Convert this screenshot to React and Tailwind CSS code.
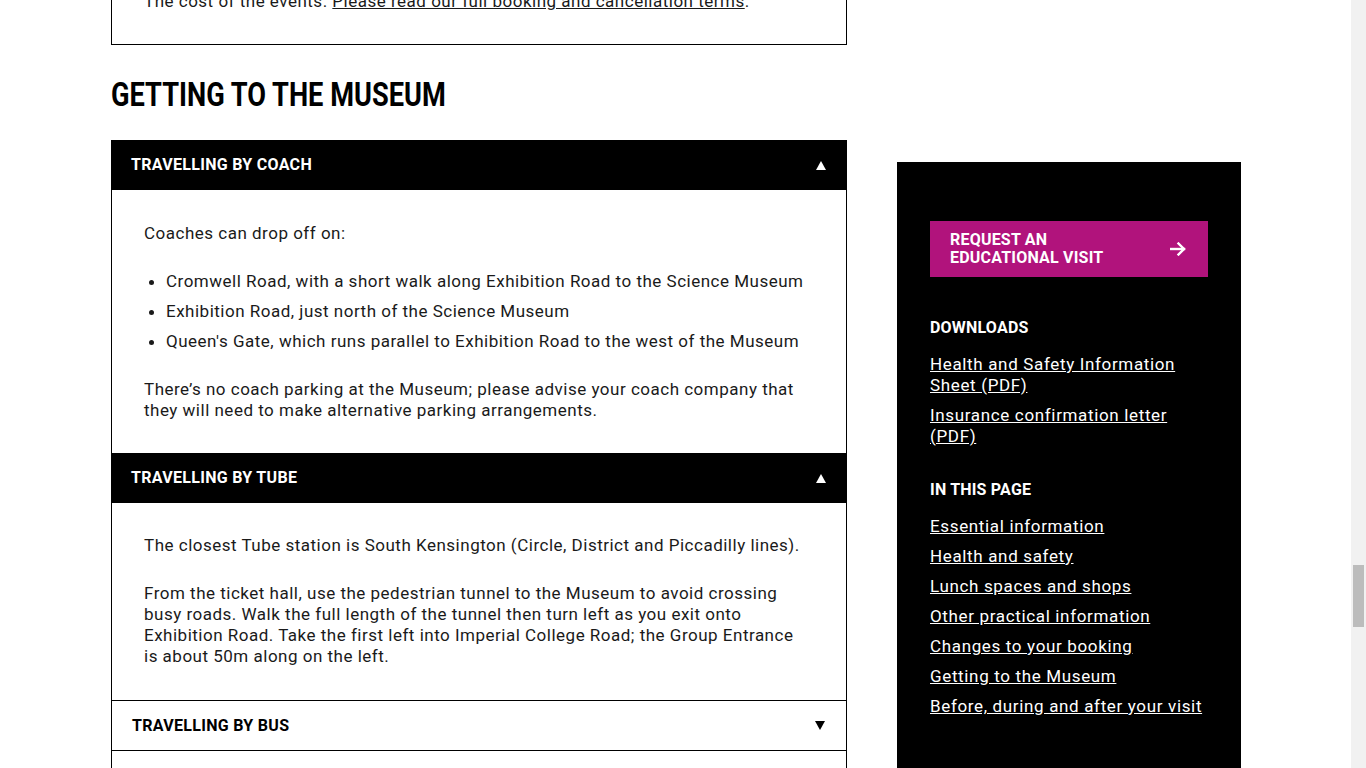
import React from "react";

const Up = () => (
  <svg width="10" height="9" viewBox="0 0 10 9" className="fill-current"><path d="M5 0 L10 9 L0 9 Z" /></svg>
);
const Down = () => (
  <svg width="10" height="9" viewBox="0 0 10 9" className="fill-current"><path d="M0 0 L10 0 L5 9 Z" /></svg>
);

const Arrow = () => (
  <svg width="16" height="14" viewBox="0 0 16 14" fill="none" stroke="white" strokeWidth="2.4" strokeLinecap="square">
    <path d="M1 7 H14" />
    <path d="M8.5 1.5 L14 7 L8.5 12.5" />
  </svg>
);

function Header({ title, open }) {
  return (
    <div className={"h-[50px] flex items-center justify-between pl-[20px] pr-[21px] " + (open ? "bg-black text-white" : "bg-white text-black border-x border-b border-black")}>
      <span className="font-bold text-[16px] tracking-[0.3px] uppercase" style={{ fontFamily: "Roboto, sans-serif" }}>{title}</span>
      {open ? <Up /> : <Down />}
    </div>
  );
}

export default function App() {
  const body = { fontFamily: "Roboto, 'Liberation Sans', sans-serif" };
  return (
    <div className="h-[768px] w-[1366px] overflow-hidden flex bg-white text-[#1a1a1a]" style={body}>
      <div className="w-[1351px] overflow-hidden">
        <div className="flex ml-[111px] gap-[50px] items-start">
          <div className="w-[736px] flex flex-col">
            <div className="-mt-[10px] border border-black pl-[32px] pr-[40px] pb-[32px] text-[17px] leading-[21px] tracking-[0.5px]">
              <p>The cost of the events. <a className="underline">Please read our full booking and cancellation terms</a>.</p>
            </div>
            <h2 className="mt-[31px] text-[34px] leading-[36px] font-bold uppercase origin-left scale-x-[0.8] whitespace-nowrap text-black" style={{ fontFamily: "Roboto, sans-serif" }}>Getting to the Museum</h2>
            <div className="mt-[28px] flex flex-col">
              <Header title="Travelling by coach" open />
              <div className="border-x border-black pl-[32px] pr-[40px] pt-[33px] pb-[32px] text-[17px] leading-[21px] tracking-[0.5px]">
                <p>Coaches can drop off on:</p>
                <ul className="mt-[27px] flex flex-col gap-[9px] list-disc pl-[22px]">
                  <li>Cromwell Road, with a short walk along Exhibition Road to the Science Museum</li>
                  <li>Exhibition Road, just north of the Science Museum</li>
                  <li>Queen's Gate, which runs parallel to Exhibition Road to the west of the Museum</li>
                </ul>
                <p className="mt-[27px]">There’s no coach parking at the Museum; please advise your coach company that they will need to make alternative parking arrangements.</p>
              </div>
              <Header title="Travelling by tube" open />
              <div className="border-x border-b border-black pl-[32px] pr-[40px] pt-[32px] pb-[33px] text-[17px] leading-[21px] tracking-[0.5px]">
                <p>The closest Tube station is South Kensington (Circle, District and Piccadilly lines).</p>
                <p className="mt-[27px]">From the ticket hall, use the pedestrian tunnel to the Museum to avoid crossing busy roads. Walk the full length of the tunnel then turn left as you exit onto Exhibition Road. Take the first left into Imperial College Road; the Group Entrance is about 50m along on the left.</p>
              </div>
              <Header title="Travelling by bus" />
              <div className="border-x border-black h-[60px] pl-[32px] pr-[40px] pt-[14px] text-[17px] leading-[21px] tracking-[0.5px]">
                <p>There are several bus routes that stop near the Museum on Cromwell Road and Exhibition Road.</p>
              </div>
            </div>
          </div>
          <aside className="mt-[162px] w-[344px] h-[700px] bg-black text-white px-[33px] pt-[59px]">
            <a className="flex items-center justify-between bg-[#b1137c] h-[56px] pl-[20px] pr-[22px]">
              <span className="font-bold text-[16px] leading-[18px] uppercase tracking-[0.2px]">Request an<br />educational visit</span>
              <Arrow />
            </a>
            <h3 className="mt-[41px] font-bold text-[16px] leading-[20px] uppercase tracking-[0.2px]">Downloads</h3>
            <ul className="mt-[16px] flex flex-col gap-[9px] text-[17px] leading-[21px] tracking-[0.65px]">
              <li><a className="underline">Health and Safety Information Sheet (PDF)</a></li>
              <li><a className="underline">Insurance confirmation letter (PDF)</a></li>
            </ul>
            <h3 className="mt-[33px] font-bold text-[16px] leading-[20px] uppercase tracking-[0.2px]">In this page</h3>
            <ul className="mt-[16px] flex flex-col gap-[9px] text-[17px] leading-[21px] tracking-[0.65px]">
              <li><a className="underline">Essential information</a></li>
              <li><a className="underline">Health and safety</a></li>
              <li><a className="underline">Lunch spaces and shops</a></li>
              <li><a className="underline">Other practical information</a></li>
              <li><a className="underline">Changes to your booking</a></li>
              <li><a className="underline">Getting to the Museum</a></li>
              <li><a className="underline">Before, during and after your visit</a></li>
            </ul>
          </aside>
        </div>
      </div>
      <div className="w-[15px] h-[768px] bg-[#f1f1f1] pt-[565px] flex justify-center">
        <div className="w-[11px] h-[62px] bg-[#bcbcbc]" />
      </div>
    </div>
  );
}
